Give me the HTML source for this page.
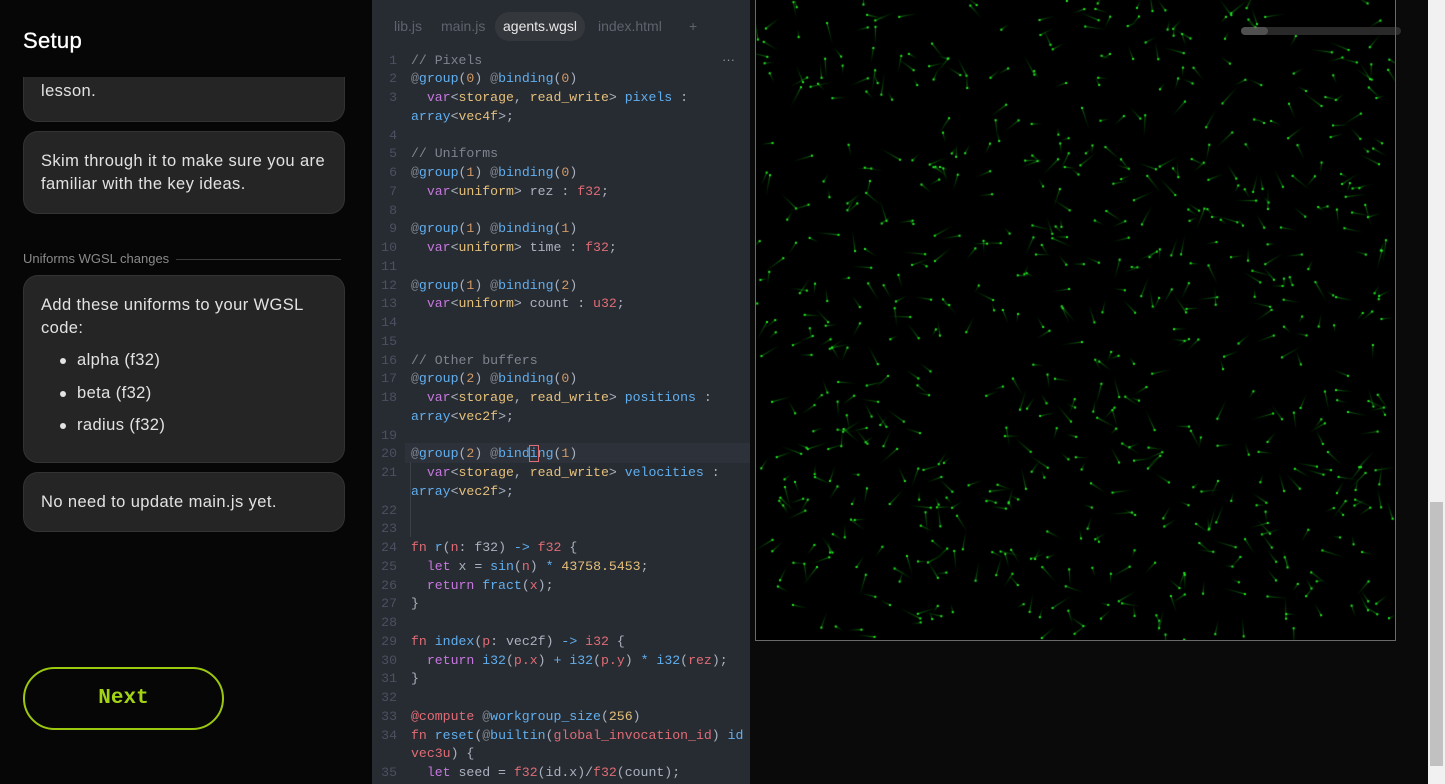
<!DOCTYPE html>
<html><head><meta charset="utf-8"><style>
*{margin:0;padding:0;box-sizing:border-box}
body{width:1445px;height:784px;overflow:hidden;background:#0a0a0a;font-family:"Liberation Sans",sans-serif;position:relative}
#left{position:absolute;left:0;top:0;width:372px;height:784px;background:#060606}
h1{position:absolute;left:23px;top:28px;font-size:22px;font-weight:normal;color:#fff;letter-spacing:0.3px;-webkit-text-stroke:0.3px #fff}
.card{position:absolute;left:23px;width:322px;background:#252525;border:1px solid #333;border-radius:15px;color:#e2e2e2;font-size:16.5px;letter-spacing:0.4px;line-height:23px;padding:0 17px}
.lbl{position:absolute;left:23px;top:251px;font-size:13px;color:#8a8a8a}
.lblline{position:absolute;left:176px;top:259px;width:165px;height:1px;background:#3a3a3a}
ul{list-style:none;margin-top:9px}
ul li{padding-left:36px;position:relative;margin-bottom:9.5px}
ul li:before{content:"";position:absolute;left:19px;top:9px;width:6px;height:6px;border-radius:50%;background:#e2e2e2}
.btn{position:absolute;left:23px;top:667px;width:201px;height:63px;border:2px solid #9bc80f;border-radius:32px;color:#a3d414;font-family:"Liberation Mono",monospace;font-weight:bold;font-size:21px;text-align:center;line-height:59px}
#ed{position:absolute;left:372px;top:0;width:378px;height:784px;background:#272b32;font-family:"Liberation Mono",monospace;font-size:13.2px;overflow:hidden}
.tab{position:absolute;top:12px;height:29px;line-height:29px;font-family:"Liberation Sans",sans-serif;font-size:14px;color:#5f646c}
.tab.act{background:#34373c;border-radius:14px;color:#e8e8e8;padding:0 8px}
.row{position:absolute;left:0;width:378px;height:18.75px;line-height:18.75px;white-space:pre;color:#abb2bf}
.n{position:absolute;right:353px;color:#4b5160;text-align:right}
.c{position:absolute;left:39px}
.cm{color:#7f848e}.at{color:#7f848e}.bl{color:#61afef}.nu{color:#d19a66}.kw{color:#c678dd}.ye{color:#e5c07b}.rd{color:#e06c75}.pl{color:#abb2bf}
#canvwrap{position:absolute;left:755px;top:0;width:641px;height:641px;border:1px solid #6a6a6a;border-top:none;background:#000;overflow:hidden}
#sb{position:absolute;left:1428px;top:0;width:17px;height:784px;background:#f1f1f1}
#th{position:absolute;left:2px;top:502px;width:13px;height:264px;background:#c1c1c1}
#hbar{position:absolute;left:1241px;top:27px;width:160px;height:8px;border-radius:4px;background:rgba(90,90,90,0.45)}
#hbar div{width:27px;height:8px;border-radius:4px;background:rgba(120,120,120,0.5)}
</style></head><body>
<div id="left">
<div class="card" style="top:50px;height:72px;border-top:none;border-radius:0 0 15px 15px;padding-top:30px">lesson.</div>
<div style="position:absolute;left:0;top:0;width:372px;height:77px;background:#060606"></div>
<h1>Setup</h1>
<div class="card" style="top:131px;height:83px;padding-top:18px">Skim through it to make sure you are familiar with the key ideas.</div>
<div class="lbl">Uniforms WGSL changes</div><div class="lblline"></div>
<div class="card" style="top:275px;height:188px;padding-top:18px">Add these uniforms to your WGSL code:
<ul><li>alpha (f32)</li><li>beta (f32)</li><li>radius (f32)</li></ul></div>
<div class="card" style="top:472px;height:60px;padding-top:18px">No need to update main.js yet.</div>
<div class="btn">Next</div>
</div>
<div id="ed">
<div class="tab" style="left:22px">lib.js</div>
<div class="tab" style="left:69px">main.js</div>
<div class="tab act" style="left:123px">agents.wgsl</div>
<div class="tab" style="left:226px">index.html</div>
<div class="tab" style="left:317px">+</div>
<div style="position:absolute;left:350px;top:52px;color:#8a8f98;font-family:'Liberation Sans';font-size:13px">···</div>
<div style="position:absolute;left:33px;top:443px;width:345px;height:20px;background:#2c313a"></div>
<div style="position:absolute;left:38px;top:462px;width:1px;height:75px;background:#3b4048"></div>
<div id="code"></div>
</div>
<div id="canvwrap"><canvas id="cv" width="640" height="640"></canvas></div>
<div id="hbar"><div></div></div>
<div id="sb"><div id="th"></div></div>
<script>
var L=[
['1','<span class="cm">// Pixels</span>'],
['2','<span class="at">@</span><span class="bl">group</span>(<span class="nu">0</span>) <span class="at">@</span><span class="bl">binding</span>(<span class="nu">0</span>)'],
['3','  <span class="kw">var</span>&lt;<span class="ye">storage</span>, <span class="ye">read_write</span>&gt; <span class="bl">pixels</span> :'],
['','<span class="bl">array</span>&lt;<span class="ye">vec4f</span>&gt;;'],
['4',''],
['5','<span class="cm">// Uniforms</span>'],
['6','<span class="at">@</span><span class="bl">group</span>(<span class="nu">1</span>) <span class="at">@</span><span class="bl">binding</span>(<span class="nu">0</span>)'],
['7','  <span class="kw">var</span>&lt;<span class="ye">uniform</span>&gt; rez : <span class="rd">f32</span>;'],
['8',''],
['9','<span class="at">@</span><span class="bl">group</span>(<span class="nu">1</span>) <span class="at">@</span><span class="bl">binding</span>(<span class="nu">1</span>)'],
['10','  <span class="kw">var</span>&lt;<span class="ye">uniform</span>&gt; time : <span class="rd">f32</span>;'],
['11',''],
['12','<span class="at">@</span><span class="bl">group</span>(<span class="nu">1</span>) <span class="at">@</span><span class="bl">binding</span>(<span class="nu">2</span>)'],
['13','  <span class="kw">var</span>&lt;<span class="ye">uniform</span>&gt; count : <span class="rd">u32</span>;'],
['14',''],['15',''],
['16','<span class="cm">// Other buffers</span>'],
['17','<span class="at">@</span><span class="bl">group</span>(<span class="nu">2</span>) <span class="at">@</span><span class="bl">binding</span>(<span class="nu">0</span>)'],
['18','  <span class="kw">var</span>&lt;<span class="ye">storage</span>, <span class="ye">read_write</span>&gt; <span class="bl">positions</span> :'],
['','<span class="bl">array</span>&lt;<span class="ye">vec2f</span>&gt;;'],
['19',''],
['20','<span class="at">@</span><span class="bl">group</span>(<span class="nu">2</span>) <span class="at">@</span><span class="bl">bind<span style="outline:1px solid #e06c75">i</span>ng</span>(<span class="nu">1</span>)'],
['21','  <span class="kw">var</span>&lt;<span class="ye">storage</span>, <span class="ye">read_write</span>&gt; <span class="bl">velocities</span> :'],
['','<span class="bl">array</span>&lt;<span class="ye">vec2f</span>&gt;;'],
['22',''],['23',''],
['24','<span class="rd">fn</span> <span class="bl">r</span>(<span class="rd">n</span>: f32) <span class="bl">-&gt;</span> <span class="rd">f32</span> {'],
['25','  <span class="kw">let</span> x = <span class="bl">sin</span>(<span class="rd">n</span>) <span class="bl">*</span> <span class="ye">43758.5453</span>;'],
['26','  <span class="kw">return</span> <span class="bl">fract</span>(<span class="rd">x</span>);'],
['27','}'],
['28',''],
['29','<span class="rd">fn</span> <span class="bl">index</span>(<span class="rd">p</span>: vec2f) <span class="bl">-&gt;</span> <span class="rd">i32</span> {'],
['30','  <span class="kw">return</span> <span class="bl">i32</span>(<span class="rd">p.x</span>) <span class="bl">+</span> <span class="bl">i32</span>(<span class="rd">p.y</span>) <span class="bl">*</span> <span class="bl">i32</span>(<span class="rd">rez</span>);'],
['31','}'],
['32',''],
['33','<span class="rd">@compute</span> <span class="at">@</span><span class="bl">workgroup_size</span>(<span class="ye">256</span>)'],
['34','<span class="rd">fn</span> <span class="bl">reset</span>(<span class="at">@</span><span class="bl">builtin</span>(<span class="rd">global_invocation_id</span>) <span class="bl">id</span> :'],
['','<span class="rd">vec3u</span>) {'],
['35','  <span class="kw">let</span> seed = <span class="rd">f32</span>(id.x)/<span class="rd">f32</span>(count);']
];
var h='';for(var i=0;i<L.length;i++){h+='<div class="row" style="top:'+(51.6+i*18.75)+'px"><span class="n">'+L[i][0]+'</span><span class="c">'+L[i][1]+'</span></div>';}
document.getElementById('code').innerHTML=h;
var c=document.getElementById('cv').getContext('2d');c.fillStyle='#000';c.fillRect(0,0,640,640);
var s=12345;function r(){s=(s*1103515245+12345)%2147483648;return s/2147483648;}
for(var k=0;k<750;k++){var x=r()*640,y=r()*640,a=r()*6.283,l=8+r()*16;
var x2=x+Math.cos(a)*l,y2=y+Math.sin(a)*l;var g=c.createLinearGradient(x2,y2,x,y);
g.addColorStop(0,'rgba(0,100,0,0)');g.addColorStop(1,'rgba(30,200,30,0.6)');
c.strokeStyle=g;c.lineWidth=1.1;c.beginPath();c.moveTo(x2,y2);c.lineTo(x,y);c.stroke();
c.fillStyle='#2e2';c.fillRect(x-1,y-1,2,2);}
</script>
</body></html>
